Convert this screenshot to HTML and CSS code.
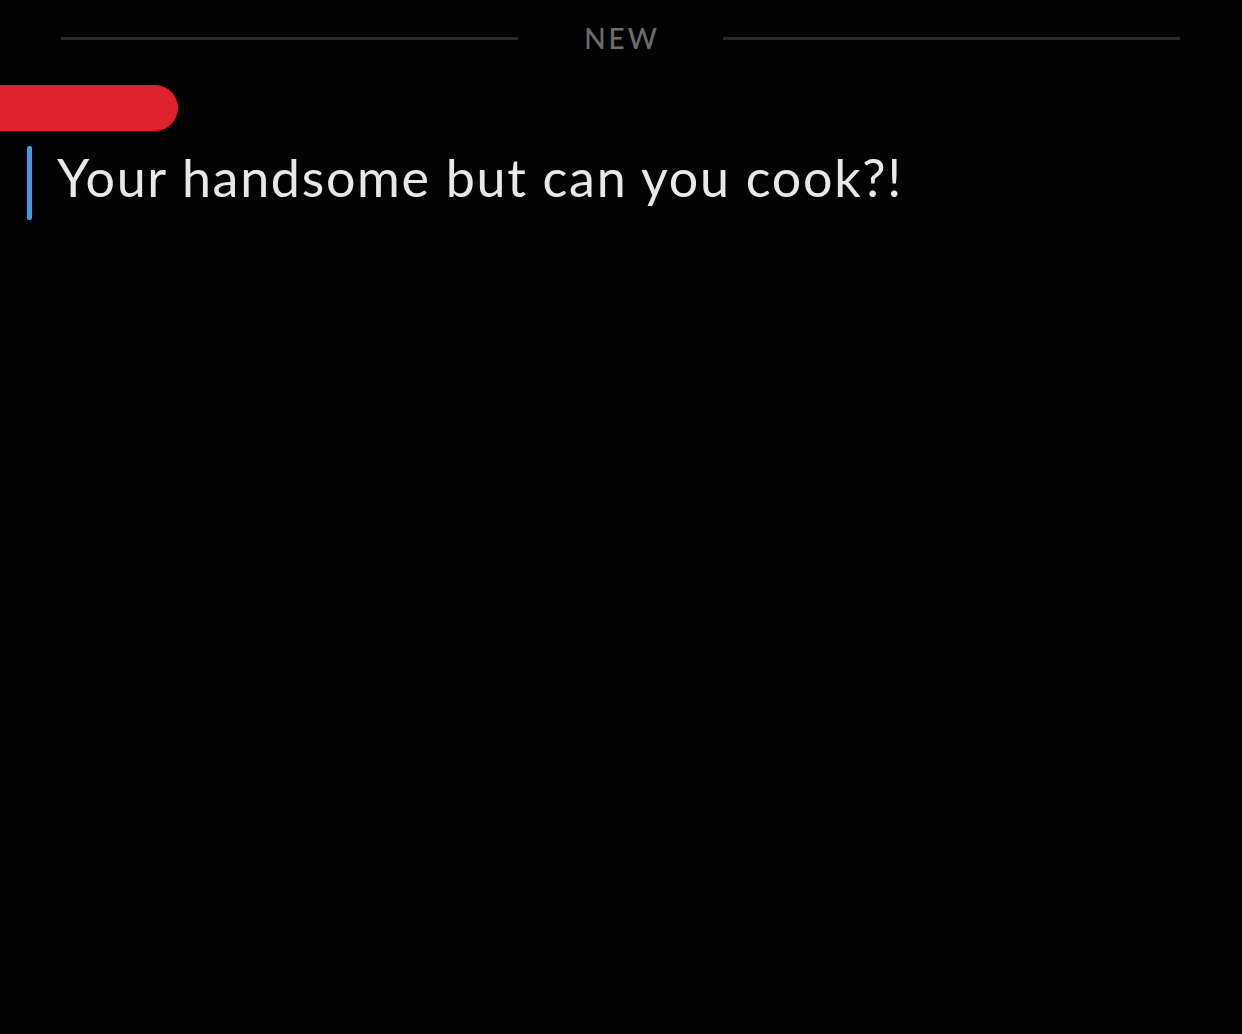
FILE: index.html
```html
<!DOCTYPE html>
<html>
<head>
<meta charset="utf-8">
<link rel="stylesheet" href="styles.css">
</head>
<body>
<div class="screen">
  <div class="divider">
    <span class="rule"></span>
    <span class="label">NEW</span>
    <span class="rule"></span>
  </div>
  <div class="sender"></div>
  <div class="message">
    <span class="bar"></span>
    <span class="text">Your handsome but can you cook?!</span>
  </div>
</div>
</body>
</html>
```
FILE: styles.css
```css
html, body {
  margin: 0;
  padding: 0;
  background: #000;
}
.screen {
  width: 1242px;
  height: 1034px;
  background: #020202;
  font-family: Lato, "Noto Sans", sans-serif;
  overflow: hidden;
}
.divider {
  display: flex;
  align-items: center;
  padding: 20px 62px 0 61px;
  height: 36px;
}
.rule {
  flex: 1;
  height: 3px;
  background: #2a2a2a;
}
.label {
  width: 202px;
  text-align: center;
  color: #6c6c6c;
  font-size: 28px;
  font-weight: 500;
  letter-spacing: 3px;
  line-height: 36px;
  padding-left: 3px;
}
.sender {
  margin-top: 29px;
  width: 178px;
  height: 46px;
  border-radius: 0 23px 23px 0;
  background: #de222e;
}
.message {
  display: flex;
  align-items: center;
  margin-top: 15px;
  padding-left: 27px;
}
.bar {
  width: 5px;
  height: 74px;
  border-radius: 2px;
  background: #3d9fe2;
}
.text {
  margin-left: 25px;
  padding-bottom: 12px;
  color: #e8e8e8;
  font-size: 52px;
  letter-spacing: 1.7px;
}
```
